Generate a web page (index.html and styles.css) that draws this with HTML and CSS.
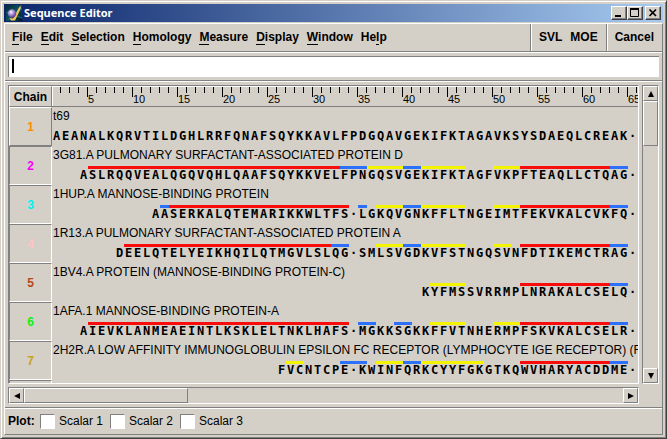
FILE: index.html
```html
<!DOCTYPE html>
<html lang="en">
<head>
<meta charset="utf-8">
<title>Sequence Editor</title>
<link rel="stylesheet" href="styles.css">
</head>
<body>
<div class="window">
  <header class="titlebar">
    <svg class="app-icon" viewBox="0 0 16 16" aria-hidden="true">
      <defs>
        <radialGradient id="orb" cx="40%" cy="35%" r="65%"><stop offset="0" stop-color="#fff"/><stop offset=".35" stop-color="#b9a4e8"/><stop offset="1" stop-color="#54368f"/></radialGradient>
        <linearGradient id="sky" x1="0" x2="1" y2="1"><stop offset="0" stop-color="#05262f"/><stop offset=".5" stop-color="#0c5360"/><stop offset="1" stop-color="#04141c"/></linearGradient>
      </defs>
      <rect width="16" height="16" fill="url(#sky)"/>
      <path d="M0 7L16 13M2 15L16 3" stroke="#1c7680" stroke-width="1"/>
      <path d="M15 1L14.5 4L9 15.500H5L3.500 13L7 13.500L13 2.500Z" fill="#f5c65c"/>
      <circle cx="6" cy="8.500" r="4.200" fill="url(#orb)"/>
    </svg>
    <h1 class="title">Sequence Editor</h1>
    <div class="window-buttons">
      <button class="win-btn" aria-label="Minimize"><svg viewBox="0 0 12 10"><path d="M2 8H8" stroke="#000" stroke-width="2"/></svg></button>
      <button class="win-btn" aria-label="Maximize"><svg viewBox="0 0 12 10"><path d="M1.500 0V8.500H9.500V0M1 1H10" fill="none" stroke="#000"/><path d="M1 1H10" stroke="#000" stroke-width="2"/></svg></button>
      <button class="win-btn win-close" aria-label="Close"><svg viewBox="0 0 12 10"><path d="M2.500 1.500L9 8M9 1.500L2.500 8" stroke="#000" stroke-width="1.700"/></svg></button>
    </div>
  </header>
  <div class="panel">
    <nav class="menubar">
      <div class="menus">
        <button class="menu"><u>F</u>ile</button>
        <button class="menu"><u>E</u>dit</button>
        <button class="menu"><u>S</u>election</button>
        <button class="menu"><u>H</u>omology</button>
        <button class="menu"><u>M</u>easure</button>
        <button class="menu"><u>D</u>isplay</button>
        <button class="menu"><u>W</u>indow</button>
        <button class="menu">He<u>l</u>p</button>
      </div>
      <div class="actions"><button class="menu">SVL</button><button class="menu">MOE</button></div>
      <div class="actions"><button class="menu">Cancel</button></div>
    </nav>
    <div class="command">
      <input class="command-input" type="text" aria-label="Command">
      <span class="caret"></span>
    </div>
    <main class="editor">
      <div class="viewport">
        <table class="sequences">
          <thead><tr><th class="chain-head" scope="col">Chain</th><th class="ruler-cell"><div class="ruler" id="ruler"></div></th></tr></thead>
          <tbody id="chains"></tbody>
        </table>
      </div>
      <div class="scroll vertical">
        <button class="arrow" aria-label="Scroll up"><svg viewBox="0 0 8 8"><path d="M4 1L7 7H1Z"/></svg></button>
        <div class="thumb"></div>
        <button class="arrow end" aria-label="Scroll down"><svg viewBox="0 0 8 8"><path d="M4 7L7 1H1Z"/></svg></button>
      </div>
      <div class="scroll horizontal">
        <button class="arrow" aria-label="Scroll left"><svg viewBox="0 0 8 8"><path d="M1 4L7 1V7Z"/></svg></button>
        <div class="thumb"></div>
        <button class="arrow end" aria-label="Scroll right"><svg viewBox="0 0 8 8"><path d="M7 4L1 1V7Z"/></svg></button>
      </div>
    </main>
    <footer class="plot">
      <span class="plot-title">Plot:</span>
      <label class="option"><input type="checkbox">Scalar 1</label>
      <label class="option"><input type="checkbox">Scalar 2</label>
      <label class="option"><input type="checkbox">Scalar 3</label>
    </footer>
  </div>
</div>
<script src="app.js"></script>
</body>
</html>
```
FILE: styles.css
```css
* { box-sizing: border-box; }

:root {
  --face: #d4d0c8;
  --shade: #808080;
  --light: #ffffff;
  --dark: #404040;
}

body {
  margin: 0;
  background: var(--face);
  color: #000;
  font: 12px/14px "Liberation Sans", Arial, sans-serif;
}

button {
  margin: 0;
  padding: 0;
  border: 0;
  background: none;
  color: inherit;
  font: inherit;
}

.window {
  display: flex;
  flex-direction: column;
  height: 100vh;
  padding: 3px;
  border: 1px solid var(--face);
  border-right-color: var(--dark);
  border-bottom-color: var(--dark);
  box-shadow: inset 1px 1px var(--light), inset -1px -1px var(--shade);
}

.titlebar {
  display: flex;
  align-items: center;
  flex: none;
  height: 18px;
  padding: 0 2px;
  background: linear-gradient(90deg, #0a246a, #a6caf0);
}

.app-icon { width: 16px; height: 16px; }

.title {
  flex: 1;
  margin: 0 0 0 2px;
  color: #fff;
  font: bold 11px/18px "Noto Sans", Tahoma, sans-serif;
}

.window-buttons { display: flex; }

.win-btn {
  width: 16px;
  height: 14px;
  padding: 1px;
  background: var(--face);
  border: 1px solid;
  border-color: var(--light) var(--dark) var(--dark) var(--light);
  box-shadow: inset -1px -1px var(--shade);
}

.win-btn svg { display: block; width: 12px; height: 10px; }
.win-close { margin-left: 2px; }

.panel {
  display: flex;
  flex-direction: column;
  flex: 1;
  min-height: 0;
  margin-top: 1px;
  border: 1px solid;
  border-color: var(--light) var(--shade) var(--shade) var(--light);
}

.menubar {
  display: flex;
  flex: none;
  height: 28px;
  border-bottom: 1px solid var(--shade);
  font-weight: bold;
}

.menus {
  display: flex;
  flex: 1;
  align-items: center;
  gap: 8px;
  padding: 0 0 2px 7px;
}

.menu u {
  text-decoration: none;
  box-shadow: 0 1px #000;
}

.actions {
  display: flex;
  align-items: center;
  gap: 8px;
  padding: 0 8px 2px;
  border-left: 1px solid var(--shade);
  box-shadow: inset 1px 0 var(--light);
}

.command {
  position: relative;
  flex: none;
  padding: 3px;
  border-top: 1px solid var(--light);
  border-bottom: 1px solid var(--shade);
}

.command-input {
  display: block;
  width: 100%;
  height: 21px;
  padding: 2px 4px;
  border: 0;
  border-top: 1px solid var(--shade);
  border-left: 1px solid var(--shade);
  border-radius: 0;
  background: #fff;
  font: inherit;
  outline: 0;
}

.caret {
  position: absolute;
  left: 7px;
  top: 6px;
  width: 2px;
  height: 14px;
  background: #000;
}

.editor {
  display: grid;
  grid-template-columns: minmax(0, 1fr) 17px;
  grid-template-rows: minmax(0, 1fr) 17px;
  gap: 3px;
  flex: 1;
  min-height: 0;
  padding: 3px;
  border-top: 1px solid var(--light);
}

.viewport {
  overflow: hidden;
  border: 1px solid;
  border-color: var(--shade) var(--light) var(--light) var(--shade);
}

.sequences {
  width: 100%;
  table-layout: fixed;
  border-collapse: separate;
  border-spacing: 0;
}

.sequences th, .sequences td { padding: 0; }

.chain-head {
  width: 43px;
  height: 21px;
  border: 1px solid;
  border-color: var(--light) var(--shade) var(--shade) var(--light);
}

.ruler-cell {
  overflow: hidden;
  border-top: 1px solid var(--light);
  border-bottom: 1px solid var(--shade);
  box-shadow: inset 1px 0 var(--light);
}

.ruler {
  display: grid;
  grid-template-columns: 8px repeat(65, 9px);
  height: 19px;
  font: 11px/11px "Liberation Sans", Arial, sans-serif;
}

.tick {
  height: 6px;
  border-left: 1px solid #000;
  text-align: left;
  white-space: nowrap;
}

.tick:first-child { border: 0; }

.major { height: 10px; padding: 7px 0 0; }

.chain {
  height: 39px;
  border: 1px solid;
  border-color: var(--shade) var(--light) var(--light) var(--shade);
  font-weight: bold;
}

.chain.active { border-color: var(--light) var(--shade) var(--shade) var(--light); }

.content {
  height: 39px;
  overflow: hidden;
  vertical-align: top;
}

.name {
  height: 20px;
  padding: 2px 0 0 1px;
  white-space: nowrap;
}

.track {
  display: grid;
  grid-template-columns: repeat(65, 9px);
  grid-template-rows: 3px 14px;
}

.bar { grid-row: 1; }
.helix { background: #f80c0c; }
.turn { background: #2c70fc; }
.strand { background: #f4f400; }

.residue {
  grid-row: 2;
  text-align: center;
  font: bold 12px/13px "DejaVu Sans Mono", monospace;
}

.scroll {
  display: flex;
  border: 1px solid;
  border-color: var(--shade) var(--light) var(--light) var(--shade);
}

.vertical { flex-direction: column; }

.arrow, .thumb {
  border: 1px solid;
  border-color: var(--light) var(--shade) var(--shade) var(--light);
}

.arrow {
  display: flex;
  align-items: center;
  justify-content: center;
  flex: none;
  width: 15px;
  height: 15px;
}

.arrow svg { width: 8px; height: 8px; }
.vertical .thumb { height: 15%; }
.horizontal .thumb { width: 26%; }
.vertical .end { margin-top: auto; }
.horizontal .end { margin-left: auto; }

.plot {
  display: flex;
  align-items: center;
  flex: none;
  height: 27px;
  padding-left: 3px;
  border-top: 1px solid var(--shade);
  box-shadow: inset 0 1px var(--light);
}

.plot-title { width: 32px; font-weight: bold; }

.option {
  display: flex;
  align-items: center;
  gap: 4px;
  width: 70px;
}

.option input {
  appearance: none;
  width: 15px;
  height: 15px;
  margin: 0;
  background: #fff;
  border: 1px solid;
  border-color: var(--shade) var(--light) var(--light) var(--shade);
}
```
FILE: app.js
```js
const chains = [
  { color: "#ff8c00", name: "t69", start: 1, seq: "AEANALKQRVTILDGHLRRFQNAFSQYKKAVLFPDGQAVGEKIFKTAGAVKSYSDAEQLCREAK·", bars: [] },
  { color: "#f800f8", name: "3G81.A PULMONARY SURFACTANT-ASSOCIATED PROTEIN D", start: 4, seq: "ASLRQQVEALQGQVQHLQAAFSQYKKVELFPNGQSVGEKIFKTAGFVKPFTEAQLLCTQAG·",
    bars: [["helix", 5, 32], ["turn", 33, 35], ["strand", 36, 39], ["turn", 40, 41], ["strand", 42, 46], ["strand", 50, 52], ["helix", 53, 62], ["turn", 63, 64]] },
  { color: "#00f0f0", name: "1HUP.A MANNOSE-BINDING PROTEIN", start: 12, seq: "AASERKALQTEMARIKKWLTFS·LGKQVGNKFFLTNGEIMTFEKVKALCVKFQ·",
    bars: [["turn", 13, 13], ["helix", 14, 33], ["turn", 35, 35], ["strand", 37, 39], ["turn", 40, 41], ["strand", 42, 46], ["strand", 50, 52], ["helix", 53, 62], ["turn", 63, 64]] },
  { color: "#ffc4c4", name: "1R13.A PULMONARY SURFACTANT-ASSOCIATED PROTEIN A", start: 8, seq: "DEELQTELYEIKHQILQTMGVLSLQG·SMLSVGDKVFSTNGQSVNFDTIKEMCTRAG·",
    bars: [["helix", 9, 31], ["turn", 32, 33], ["strand", 37, 39], ["turn", 40, 41], ["strand", 42, 46], ["strand", 50, 51], ["helix", 53, 62], ["turn", 63, 64]] },
  { color: "#b84818", name: "1BV4.A PROTEIN (MANNOSE-BINDING PROTEIN-C)", start: 42, seq: "KYFMSSVRRMPLNRAKALCSELQ·",
    bars: [["strand", 43, 46], ["helix", 53, 62], ["turn", 63, 64]] },
  { color: "#10f010", name: "1AFA.1 MANNOSE-BINDING PROTEIN-A", start: 4, seq: "AIEVKLANMEAEINTLKSKLELTNKLHAFS·MGKKSGKKFFVTNHERMPFSKVKALCSELR·",
    bars: [["helix", 5, 33], ["turn", 35, 36], ["turn", 39, 40], ["strand", 43, 46], ["strand", 50, 52], ["helix", 53, 62], ["turn", 63, 64]] },
  { color: "#c8a020", name: "2H2R.A LOW AFFINITY IMMUNOGLOBULIN EPSILON FC RECEPTOR (LYMPHOCYTE IGE RECEPTOR) (FC", start: 26, seq: "FVCNTCPE·KWINFQRKCYYFGKGTKQWVHARYACDDME·",
    bars: [["strand", 27, 28], ["turn", 33, 35], ["strand", 37, 39], ["turn", 40, 41], ["strand", 42, 48], ["helix", 53, 62], ["turn", 63, 64]] },
  { color: "#808080", name: "", start: 1, seq: "", bars: [] }
];

const ruler = document.getElementById("ruler");
for (let i = 1; i <= 66; i++) {
  const tick = document.createElement("div");
  tick.className = i % 5 ? "tick" : "tick major";
  if (i % 5 === 0) tick.textContent = i;
  ruler.append(tick);
}

const body = document.getElementById("chains");
chains.forEach((chain, index) => {
  const bars = chain.bars.map(([kind, from, to]) =>
    `<span class="bar ${kind}" style="grid-column:${from}/${to + 1}"></span>`).join("");
  const letters = [...chain.seq].map((c, i) =>
    `<span class="residue" style="grid-column:${chain.start + i}">${c}</span>`).join("");
  const row = document.createElement("tr");
  row.innerHTML = `<th scope="row" class="chain${index ? "" : " active"}" style="color:${chain.color}">${chain.name ? index + 1 : ""}</th>
    <td class="content"><div class="name">${chain.name}</div><div class="track">${bars}${letters}</div></td>`;
  body.append(row);
});
```
